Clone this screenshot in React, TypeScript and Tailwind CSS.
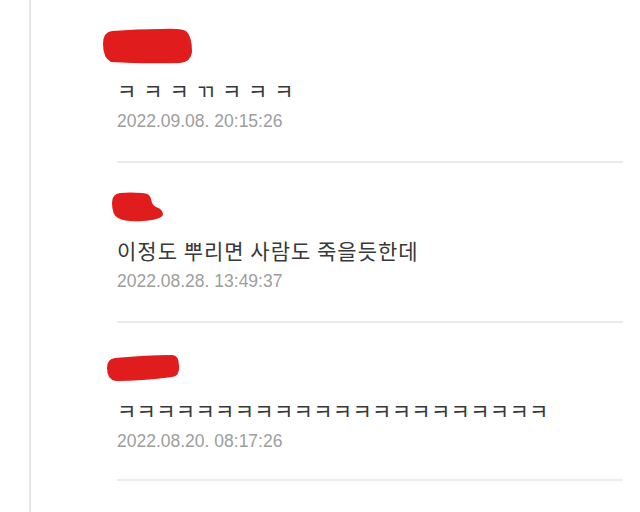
import React from "react";

function Blob({ d }: { d: string }) {
  return (
    <svg width="100" height="40" viewBox="0 0 100 40" className="block">
      <defs>
        <filter id="soft" x="-10%" y="-20%" width="120%" height="140%">
          <feGaussianBlur stdDeviation="0.7" />
        </filter>
      </defs>
      <path d={d} fill="#e11b1c" filter="url(#soft)" />
    </svg>
  );
}

type C = { blob: string; text: string; date: string; textCls: string; pb: string };

const comments: C[] = [
  {
    blob: "M10 3 Q1 4 1 16 Q1 30 9 34 Q40 36 78 35 Q89 34 90 24 Q90 8 84 3 Q78 0 60 1 Q35 1 10 3 Z",
    text: "ㅋ ㅋ ㅋ ㄲ ㅋ ㅋ ㅋ",
    date: "2022.09.08. 20:15:26",
    textCls: "text-[21px] tracking-[1.1px]",
    pb: "pb-[29px]",
  },
  {
    blob: "M18 5 Q10 6 10 15 Q10 27 16 30 Q24 34 40 33 Q58 32 61 27 Q61 21 54 19 Q50 17 49 11 Q48 5 40 5 Q28 4 18 5 Z",
    text: "이정도 뿌리면 사람도 죽을듯한데",
    date: "2022.08.28. 13:49:37",
    textCls: "text-[21px] tracking-[1px]",
    pb: "pb-[29px]",
  },
  {
    blob: "M13 10 Q5 11 5 20 Q5 32 14 33 Q40 33 70 29 Q78 28 77 18 Q77 7 70 7 Q45 7 13 10 Z",
    text: "ㅋㅋㅋㅋㅋㅋㅋㅋㅋㅋㅋㅋㅋㅋㅋㅋㅋㅋㅋㅋㅋㅋ",
    date: "2022.08.20. 08:17:26",
    textCls: "text-[21px] tracking-[0.3px]",
    pb: "pb-[27px]",
  },
];

export default function App() {
  return (
    <div className="w-[640px] h-[512px] bg-white overflow-hidden flex">
      <div className="ml-[29px] w-[2px] h-full bg-[#e6e6e6]" />
      <div className="ml-[86px] w-[506px] pt-[3px] flex flex-col">
        {comments.map((c, i) => (
          <div key={i} className={`pt-[25px] ${c.pb} border-b-2 border-[#ebebeb] flex flex-col`}>
            <div className="-ml-[15px] h-[40px]">
              <Blob d={c.blob} />
            </div>
            <div
              className={`mt-[10px] h-[24px] leading-[24px] text-[#383838] whitespace-nowrap ${c.textCls}`}
              style={{ fontFamily: '"Noto Sans CJK KR", "Noto Sans", sans-serif' }}
            >
              {c.text}
            </div>
            <div
              className="mt-[8px] h-[22px] leading-[22px] text-[17.5px] text-[#9d9d9d] whitespace-nowrap"
              style={{ fontFamily: '"Liberation Sans", Arial, sans-serif' }}
            >
              {c.date}
            </div>
          </div>
        ))}
      </div>
    </div>
  );
}
